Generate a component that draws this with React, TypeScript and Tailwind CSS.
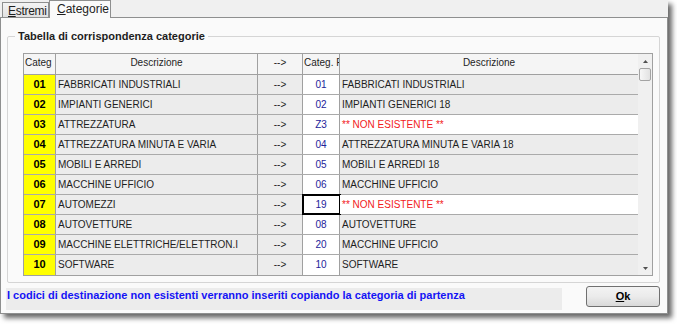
import React from "react";

type Row = { c: string; d: string; f: string; d2: string; missing?: boolean; focus?: boolean };

const rows: Row[] = [
  { c: "01", d: "FABBRICATI INDUSTRIALI", f: "01", d2: "FABBRICATI INDUSTRIALI" },
  { c: "02", d: "IMPIANTI GENERICI", f: "02", d2: "IMPIANTI GENERICI 18" },
  { c: "03", d: "ATTREZZATURA", f: "Z3", d2: "** NON ESISTENTE **", missing: true },
  { c: "04", d: "ATTREZZATURA MINUTA E VARIA", f: "04", d2: "ATTREZZATURA MINUTA E VARIA 18" },
  { c: "05", d: "MOBILI E ARREDI", f: "05", d2: "MOBILI E ARREDI 18" },
  { c: "06", d: "MACCHINE UFFICIO", f: "06", d2: "MACCHINE UFFICIO" },
  { c: "07", d: "AUTOMEZZI", f: "19", d2: "** NON ESISTENTE **", missing: true, focus: true },
  { c: "08", d: "AUTOVETTURE", f: "08", d2: "AUTOVETTURE" },
  { c: "09", d: "MACCHINE ELETTRICHE/ELETTRON.I", f: "20", d2: "MACCHINE UFFICIO" },
  { c: "10", d: "SOFTWARE", f: "10", d2: "SOFTWARE" },
];

export default function App() {
  return (
    <div className="w-[677px] h-[324px] bg-white overflow-hidden font-['Liberation_Sans',Arial,sans-serif] text-[#1e1e1e]">
      <div className="w-[668px] h-[314px] bg-[#f0f0f0] flex flex-col shadow-[4px_4px_5px_rgba(0,0,0,0.6)]">
        {/* Tabs */}
        <div className="h-[17px] flex items-end pl-[2px] relative z-10 shrink-0">
          <div className="w-[47px] h-[15px] border border-b-0 border-[#8e8f8f] bg-gradient-to-b from-[#f4f4f4] to-[#e1e1e1] text-[12px] leading-[14px] pl-[5px] pt-[1px] tracking-[-0.3px] overflow-hidden whitespace-nowrap">
            <span className="underline">E</span>stremi
          </div>
          <div className="w-[62px] h-[18px] -mb-px border border-b-0 border-[#8e8f8f] bg-[#fafafa] text-[12px] leading-[14px] pl-[7px] pt-[1px] whitespace-nowrap">
            <span className="underline">C</span>ategorie
          </div>
        </div>

        {/* Panel */}
        <div className="flex-1 border border-[#8e8f8f] bg-[#fafafa] flex flex-col pl-[6px] pr-[7px]">
          <fieldset className="mt-[12px] border border-[#d5d5d5] rounded-[2px]">
            <legend className="ml-[7px] px-[3px] text-[11px] leading-[13px] font-bold text-[#1e1e1e]">
              Tabella di corrispondenza categorie
            </legend>
            <div className="pl-[15px] pr-[6px] pt-[10px] pb-[6px]">
              <div className="w-[630px] border border-[#a0a0a0] flex bg-white">
                <div className="w-[614px] flex flex-col">
                  {/* Header */}
                  <div className="h-[21px] grid grid-cols-[32px_202px_45px_37px_298px] border-b border-[#a0a0a0] bg-[#f5f5f5] text-[10px] leading-[18px]">
                    <div className="border-r border-[#a0a0a0] pl-[1px] overflow-hidden whitespace-nowrap">Categ</div>
                    <div className="border-r border-[#a0a0a0] text-center">Descrizione</div>
                    <div className="border-r border-[#a0a0a0] text-center">--&gt;</div>
                    <div className="border-r border-[#a0a0a0] pl-[1px] overflow-hidden whitespace-nowrap">Categ. F</div>
                    <div className="text-center">Descrizione</div>
                  </div>
                  {rows.map((r) => (
                    <div
                      key={r.c}
                      className="h-[20px] grid grid-cols-[32px_202px_45px_37px_298px] border-b border-[#aaaaaa] leading-[19px] last:border-b-0"
                    >
                      <div className="border-r border-[#a0a0a0] bg-[#ffff00] text-center text-[11px] font-bold text-black">
                        {r.c}
                      </div>
                      <div className="border-r border-[#a0a0a0] bg-[#ececec] text-[10px] pl-[2px] whitespace-nowrap overflow-hidden">
                        {r.d}
                      </div>
                      <div className="border-r border-[#a0a0a0] bg-[#ececec] text-[10px] text-center">--&gt;</div>
                      <div
                        className={
                          r.focus
                            ? "border-r border-[#a0a0a0] bg-white text-[10px] text-center text-[#23239a] outline-2 outline-black -outline-offset-1"
                            : "border-r border-[#a0a0a0] bg-white text-[10px] text-center text-[#23239a]"
                        }
                      >
                        {r.f}
                      </div>
                      <div
                        className={
                          r.missing
                            ? "bg-white text-[10px] pl-[2px] text-[#f21c1c] whitespace-nowrap"
                            : "bg-[#ececec] text-[10px] pl-[2px] whitespace-nowrap"
                        }
                      >
                        {r.d2}
                      </div>
                    </div>
                  ))}
                </div>
                {/* Scrollbar */}
                <div className="w-[14px] bg-[#f0f0f0] flex flex-col">
                  <div className="h-[14px] flex items-end justify-center pb-[5px]">
                    <svg width="5" height="3" viewBox="0 0 5 3">
                      <path d="M0 3 L2.5 0 L5 3 Z" fill="#505050" />
                    </svg>
                  </div>
                  <div className="h-[13px] mx-[1px] rounded-[2px] border border-[#a3a3a3] bg-gradient-to-r from-[#f7f7f7] to-[#e2e2e2]" />
                  <div className="flex-1" />
                  <div className="h-[14px] flex items-start justify-center pt-[6px]">
                    <svg width="5" height="3" viewBox="0 0 5 3">
                      <path d="M0 0 L2.5 3 L5 0 Z" fill="#505050" />
                    </svg>
                  </div>
                </div>
              </div>
            </div>
          </fieldset>

          {/* Bottom row */}
          <div className="mt-[3px] flex items-start">
            <div className="-ml-px mt-[2px] w-[556px] h-[22px] bg-[#ececec] pl-[1px] pt-[1px] text-[11px] leading-[13px] font-bold text-[#1414f5] whitespace-nowrap">
              I codici di destinazione non esistenti verranno inseriti copiando la categoria di partenza
            </div>
            <button className="ml-auto w-[74px] h-[21px] rounded-[3px] border border-[#707070] bg-gradient-to-b from-[#f3f3f3] via-[#ebebeb] to-[#d9d9d9] text-[11px] font-bold text-black leading-[19px]">
              <span className="underline">O</span>k
            </button>
          </div>
        </div>
      </div>
    </div>
  );
}
